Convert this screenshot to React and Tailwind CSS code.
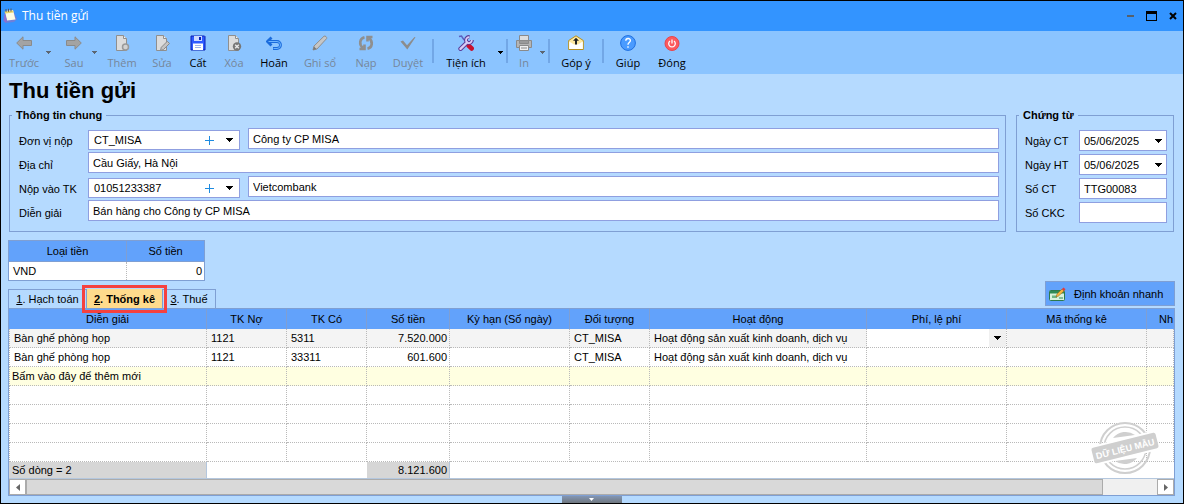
import React from "react";

const columns = [
  { title: "Diễn giải", width: "w-[198px]" },
  { title: "TK Nợ", width: "w-20" },
  { title: "TK Có", width: "w-20" },
  { title: "Số tiền", width: "w-[83px]" },
  { title: "Kỳ hạn (Số ngày)", width: "w-[120px]" },
  { title: "Đối tượng", width: "w-20" },
  { title: "Hoạt động", width: "w-[217px]" },
  { title: "Phí, lệ phí", width: "w-[140px]" },
  { title: "Mã thống kê", width: "w-[140px]" },
  { title: "Nh", width: "" },
];

const rows = [
  ["Bàn ghế phòng họp", "1121", "5311", "7.520.000", "", "CT_MISA", "Hoạt động sản xuất kinh doanh, dịch vụ", "", "", ""],
  ["Bàn ghế phòng họp", "1121", "33311", "601.600", "", "CT_MISA", "Hoạt động sản xuất kinh doanh, dịch vụ", "", "", ""],
];

const blank = ["", "", "", "", "", "", "", "", "", ""];

function Caret({ className = "text-black" }) {
  return (
    <svg width="7" height="4" viewBox="0 0 7 4" className={`shrink-0 pointer-events-none ${className}`} shapeRendering="crispEdges">
      <path fill="currentColor" d="M0 0h7v1H0zM1 1h5v1H1zM2 2h3v1H2zM3 3h1v1H3z" />
    </svg>
  );
}

function SmallCaret({ className }) {
  return (
    <svg width="5" height="3" viewBox="0 0 5 3" className={`shrink-0 ${className}`} shapeRendering="crispEdges">
      <path fill="currentColor" d="M0 0h5v1H0zM1 1h3v1H1zM2 2h1v1H2z" />
    </svg>
  );
}

function PageIcon({ children }) {
  return (
    <svg width="16" height="16" viewBox="0 0 16 16" fill="none">
      <path d="M2.500.5h7l3 3v12h-10z" fill="#dcdcdc" stroke="#8f8f8f" />
      <path d="M9.500.5v3h3" fill="#f4f4f4" stroke="#8f8f8f" />
      {children}
    </svg>
  );
}

const icons = {
  back: (
    <svg width="16" height="16" viewBox="0 0 16 16">
      <path d="M.7 8 7 1.800V5.500h8.500v5H7v3.700z" fill="#a3a3a3" stroke="#8a8a8a" />
    </svg>
  ),
  next: (
    <svg width="16" height="16" viewBox="0 0 16 16">
      <path d="M15.300 8 9 1.800V5.500H.5v5H9v3.700z" fill="#a3a3a3" stroke="#8a8a8a" />
    </svg>
  ),
  add: (
    <PageIcon>
      <circle cx="11.500" cy="12" r="3" fill="#d2d2d2" stroke="#999" strokeWidth="1.500" />
    </PageIcon>
  ),
  edit: (
    <PageIcon>
      <path d="M6.500 15.500l.8-3.200 6-6 2.200 2.200-6 6z" fill="#c4c4c4" stroke="#8a8a8a" />
    </PageIcon>
  ),
  save: (
    <svg width="16" height="16" viewBox="0 0 16 16">
      <path d="M1 1h13.500l.5.500V15H1z" fill="#2f5bff" stroke="#0b1fb4" />
      <path d="M4 1h8v5H4z" fill="#cdd9ff" />
      <path d="M9 2h2v3H9z" fill="#0b1fb4" />
      <path d="M3 8.500h10V15H3z" fill="#fff" />
      <path d="M5 10.500h6M5 12.500h6" stroke="#9fb3e8" />
    </svg>
  ),
  remove: (
    <PageIcon>
      <circle cx="11" cy="11.500" r="4.200" fill="#777" />
      <path d="M9.200 9.700l3.600 3.600M12.800 9.700l-3.600 3.600" stroke="#e8e8e8" strokeWidth="1.400" />
    </PageIcon>
  ),
  undo: (
    <svg width="16" height="16" viewBox="0 0 16 16" fill="none">
      <path d="M5.500 2.500 1.500 6.500l4 4M2 6.500h9a3.500 3.500 0 0 1 0 7H7" stroke="#1a6bdc" strokeWidth="2.800" />
      <path d="M2.500 6.500H11a3.500 3.500 0 0 1 0 7H7.500" stroke="#6db4ff" />
    </svg>
  ),
  post: (
    <svg width="16" height="16" viewBox="0 0 16 16">
      <path d="M1 15l1-4L12 1.200c1.200-.8 3.300 1 2.600 2.400L5 14z" fill="#c6c6c6" stroke="#8f8f8f" />
      <path d="M1 15l1-3.500L4.500 14z" fill="#777" />
    </svg>
  ),
  load: (
    <svg width="16" height="16" viewBox="0 0 16 16" fill="none" stroke="#8f8f8f" strokeWidth="2.600">
      <path d="M6.500 2.200C1.500 3.500.8 9.500 4.800 12.800M1.500 14h5V9.500" />
      <path d="M9.500 13.800c5-1.300 5.700-7.300 1.700-10.600M14.500 2h-5v4.500" />
    </svg>
  ),
  approve: (
    <svg width="16" height="16" viewBox="0 0 16 16">
      <path d="M.5 6.500 3 5.500l4 4.700L14.500 2l1 .3L7.300 14.500z" fill="#8c8c8c" />
    </svg>
  ),
  tools: (
    <svg width="16" height="16" viewBox="0 0 16 16" fill="none">
      <path d="M1 1.500 3.500 1l1.800 2.800L10 9" stroke="#5b5fc0" strokeWidth="1.500" />
      <path d="M10.500 10.500l3.200 3" stroke="#c8102e" strokeWidth="4.500" strokeLinecap="round" />
      <path d="M2.500 13.800 9 7.500" stroke="#5a3d9a" strokeWidth="4.400" strokeLinecap="round" />
      <path d="M11.500 2A3 3 0 1 0 14 5" stroke="#5a3d9a" strokeWidth="3.800" />
      <path d="M2.500 13.800 9 7.500" stroke="#d9ccf5" strokeWidth="2.400" strokeLinecap="round" />
      <path d="M11.300 2.300A2.900 2.900 0 1 0 13.800 5" stroke="#d9ccf5" strokeWidth="1.800" />
    </svg>
  ),
  print: (
    <svg width="16" height="16" viewBox="0 0 16 16" stroke="#8a8a8a">
      <path d="M.5 5.500h15v7H.5z" fill="#b5b5b5" />
      <path d="M3.500.5h9v5h-9z" fill="#dedede" />
      <path d="M3.500 5.500h9v3h-9z" fill="#9a9a9a" />
      <path d="M3.500 10.500h9v5h-9z" fill="#efefef" />
      <path d="M5 13h6" />
    </svg>
  ),
  feedback: (
    <svg width="16" height="16" viewBox="0 0 16 16">
      <path d="M.7 5.500 8 .8l7.300 4.700v9H.7z" fill="#ffe9a0" stroke="#b8901c" />
      <path d="M1.200 6.500 6 9.500h4l4.800-3V14H1.200z" fill="#fff" />
      <path d="M8 2.800l3 3H9V9.500H7V5.800H5z" fill="#222" />
    </svg>
  ),
  help: (
    <svg width="16" height="16" viewBox="0 0 16 16" fill="none">
      <circle cx="8" cy="8" r="7.400" fill="#4a9bff" stroke="#1f6fe0" />
      <path d="M5.800 5.800c0-3 4.600-3 4.600-.2C10.400 7.600 8 7.600 8 9.800M8 11.300v1.500" stroke="#fff" strokeWidth="1.400" />
    </svg>
  ),
  close: (
    <svg width="16" height="16" viewBox="0 0 16 16" fill="none">
      <circle cx="8" cy="8.500" r="7" fill="#fb5a5f" stroke="#e8454b" />
      <path d="M6 6a3.300 3.300 0 1 0 4 0M8 4.500V8.500" stroke="#fff" strokeWidth="1.300" />
    </svg>
  ),
};

function ToolButton({ icon, label, width, disabled }) {
  return (
    <button
      type="button"
      disabled={disabled}
      className={`flex flex-col items-center gap-1 whitespace-nowrap text-[11px] leading-4 ${width} ${
        disabled ? "text-[#76869a]" : "text-black"
      }`}
    >
      {icons[icon]}
      <span>{label}</span>
    </button>
  );
}

function ToolCaret({ label, disabled }) {
  return (
    <button type="button" aria-label={label} disabled={disabled} className="flex w-2 justify-center pt-4">
      <SmallCaret className={disabled ? "text-[#5c6672]" : "text-black"} />
    </button>
  );
}

function Separator() {
  return <span className="mx-0.5 mt-1 h-6 w-0.5 bg-[#72a7e6]" />;
}

function TextField({ id, value, className }) {
  return <input id={id} aria-label={id} defaultValue={value} className={`h-[21px] min-w-0 border border-[#8f9fe0] bg-white px-1 outline-none ${className}`} />;
}

function Combo({ id, value }) {
  return (
    <div className="flex h-5 w-[152px] shrink-0 items-center border border-[#8f9fe0] bg-white pl-[5px]">
      <select id={id} className="h-full min-w-0 flex-1 appearance-none outline-none">
        <option>{value}</option>
      </select>
      <button type="button" aria-label="Thêm" className="flex w-5 justify-center">
        <svg width="9" height="9" viewBox="0 0 9 9">
          <path d="M4 0h1v4h4v1H5v4H4V5H0V4h4z" fill="#1d8be0" />
        </svg>
      </button>
      <span className="flex w-5 justify-center">
        <Caret />
      </span>
    </div>
  );
}

function DateField({ id, value }) {
  return (
    <div className="flex h-[21px] w-[88px] items-center border border-[#8f9fe0] bg-white px-1">
      <select id={id} className="h-full min-w-0 flex-1 appearance-none outline-none">
        <option>{value}</option>
      </select>
      <Caret />
    </div>
  );
}

function Stamp() {
  return (
    <svg className="pointer-events-none absolute right-[15px] bottom-5" width="68" height="54" viewBox="0 0 68 54" fill="none">
      <circle cx="34" cy="27" r="25" stroke="#cfcfcf" strokeWidth="2" />
      <circle cx="34" cy="27" r="21" stroke="#cfcfcf" strokeWidth="1.500" />
      <path d="M22 17a16 16 0 0 1 22-3zM24 40a16 16 0 0 0 22-3z" fill="#cfcfcf" />
      <g transform="rotate(-14 34 27)">
        <rect x="1" y="17" width="66" height="20" fill="#fff" />
        <rect x="1" y="19" width="66" height="16" rx="2" fill="#cfcfcf" />
        <text x="34" y="31" textAnchor="middle" fontSize="9" fontWeight="700" fill="#fff">
          DỮ LIỆU MẪU
        </text>
      </g>
    </svg>
  );
}

function Cell({ index, value, active }) {
  const align = index === 3 ? "pr-0.5 text-right" : "pl-1";
  const first = index === 0 ? "border-l" : "";
  if (active) {
    return (
      <td className="border-r border-b border-dotted border-[#b9b9b9] bg-white p-0">
        <div className="flex h-[18px] items-center">
          <select aria-label="Phí, lệ phí" className="h-full min-w-0 flex-1 appearance-none bg-white outline-none" />
          <span className="flex h-full w-[17px] items-center justify-center bg-[#f0f0f0]">
            <Caret />
          </span>
        </div>
      </td>
    );
  }
  return <td className={`h-[19px] whitespace-nowrap border-r border-b border-dotted border-[#b9b9b9] py-0 ${align} ${first}`}>{value}</td>;
}

export default function App() {
  return (
    <div className="flex min-h-screen flex-col border border-black bg-[#b5daff] font-['Liberation_Sans',Arial,sans-serif] text-[11px] leading-4 text-black">
      <header className="flex h-[30px] items-center bg-[#3394ff] pl-0.5 pr-1.5 font-['Open_Sans','Noto_Sans',sans-serif]">
        <svg width="14" height="16" viewBox="0 0 14 16">
          <path d="M2 3l8-1 4 9-3 3-9 1z" fill="#6f7fd8" />
          <path d="M2 3l8-1 2.500 9.500L4 12.500z" fill="#fdfbe4" />
          <path d="M1.500 3.500 10 2.500l.5 2L2 5.500z" fill="#e9d46a" />
          <path d="M3 1v3M5.500.800v3M8 .5v3" stroke="#555" />
          <path d="M1.500 5l-1 8 2 1.500 1.500-2z" fill="#8d6fd0" />
        </svg>
        <span className="ml-[5px] text-xs leading-4 text-white">Thu tiền gửi</span>
        <div className="ml-auto flex items-center gap-3">
          <button type="button" aria-label="Thu nhỏ" className="h-0.5 w-[7px] bg-[#55606c]" />
          <button type="button" aria-label="Phóng to" className="h-2.5 w-[11px] border border-t-[3px] border-black" />
          <button type="button" aria-label="Đóng">
            <svg width="8" height="8" viewBox="0 0 8 8">
              <path d="M1 1l6 6M7 1 1 7" stroke="#000" strokeWidth="2" />
            </svg>
          </button>
        </div>
      </header>

      <nav className="flex h-[43px] items-start bg-[#8bc4ff] pl-[3px] pt-1 font-['Open_Sans','Noto_Sans',sans-serif]">
        <ToolButton icon="back" label="Trước" width="w-10" disabled />
        <ToolCaret label="Trước, chọn" disabled />
        <div className="ml-1.5 flex">
          <ToolButton icon="next" label="Sau" width="w-8" disabled />
          <ToolCaret label="Sau, chọn" disabled />
        </div>
        <div className="ml-1 flex">
          <ToolButton icon="add" label="Thêm" width="w-10" disabled />
          <ToolButton icon="edit" label="Sửa" width="w-10" disabled />
          <ToolButton icon="save" label="Cất" width="w-8" />
          <ToolButton icon="remove" label="Xóa" width="w-10" disabled />
          <ToolButton icon="undo" label="Hoãn" width="w-10" />
          <ToolButton icon="post" label="Ghi sổ" width="w-13" disabled />
          <ToolButton icon="load" label="Nạp" width="w-10" disabled />
          <ToolButton icon="approve" label="Duyệt" width="w-11" disabled />
        </div>
        <Separator />
        <ToolButton icon="tools" label="Tiện ích" width="w-15" />
        <ToolCaret label="Tiện ích, chọn" />
        <Separator />
        <ToolButton icon="print" label="In" width="w-7" disabled />
        <ToolCaret label="In, chọn" disabled />
        <Separator />
        <ToolButton icon="feedback" label="Góp ý" width="w-12" />
        <Separator />
        <ToolButton icon="help" label="Giúp" width="w-11" />
        <ToolButton icon="close" label="Đóng" width="w-11" />
      </nav>

      <main className="flex flex-1 flex-col pl-[7px] pr-2 pt-[5px]">
        <h1 className="h-7 pl-px text-[22px] font-bold leading-6">Thu tiền gửi</h1>

        <div className="flex gap-2.5 px-px">
          <fieldset className="min-w-0 flex-1 border border-[#7f9fd3] pl-[7px] pr-1.5 pb-[9px]">
            <legend className="-ml-[5px] px-1 font-bold">Thông tin chung</legend>
            <div className="flex flex-col gap-[3px] pt-[5px]">
              <div className="flex h-[21px]">
                <label htmlFor="donvi" className="w-[71px] shrink-0 pl-0.5 pt-[5px]">Đơn vị nộp</label>
                <div className="pt-0.5"><Combo id="donvi" value="CT_MISA" /></div>
                <TextField id="ten-donvi" value="Công ty CP MISA" className="ml-2 flex-1" />
              </div>
              <div className="flex h-[21px]">
                <label htmlFor="diachi" className="w-[71px] shrink-0 pl-0.5 pt-[5px]">Địa chỉ</label>
                <TextField id="diachi" value="Cầu Giấy, Hà Nội" className="flex-1" />
              </div>
              <div className="flex h-[21px]">
                <label htmlFor="taikhoan" className="w-[71px] shrink-0 pl-0.5 pt-[5px]">Nộp vào TK</label>
                <div className="pt-0.5"><Combo id="taikhoan" value="01051233387" /></div>
                <TextField id="nganhang" value="Vietcombank" className="ml-2 flex-1" />
              </div>
              <div className="flex h-[21px]">
                <label htmlFor="diengiai" className="w-[71px] shrink-0 pl-0.5 pt-[5px]">Diễn giải</label>
                <TextField id="diengiai" value="Bán hàng cho Công ty CP MISA" className="flex-1" />
              </div>
            </div>
          </fieldset>

          <fieldset className="w-[158px] shrink-0 border border-[#7f9fd3] pl-2 pr-1.5 pb-2">
            <legend className="-ml-1.5 px-1 font-bold">Chứng từ</legend>
            <div className="flex flex-col gap-[3px] pt-[7px]">
              <div className="flex h-[21px] items-center justify-between">
                <label htmlFor="ngayct">Ngày CT</label>
                <DateField id="ngayct" value="05/06/2025" />
              </div>
              <div className="flex h-[21px] items-center justify-between">
                <label htmlFor="ngayht">Ngày HT</label>
                <DateField id="ngayht" value="05/06/2025" />
              </div>
              <div className="flex h-[21px] items-center justify-between">
                <label htmlFor="soct">Số CT</label>
                <TextField id="soct" value="TTG00083" className="w-[88px]" />
              </div>
              <div className="flex h-[21px] items-center justify-between">
                <label htmlFor="sockc">Số CKC</label>
                <TextField id="sockc" value="" className="w-[88px]" />
              </div>
            </div>
          </fieldset>
        </div>

        <div className="mt-2 flex items-end justify-between">
          <div>
            <table className="w-[197px] table-fixed border border-[#7f9fd3] bg-white">
              <thead>
                <tr className="h-[21px] bg-[#62a2fb]">
                  <th className="w-[118px] border-r border-b border-[#7f9fd3] p-0 font-normal">Loại tiền</th>
                  <th className="border-b border-[#7f9fd3] p-0 font-normal">Số tiền</th>
                </tr>
              </thead>
              <tbody>
                <tr className="h-[19px]">
                  <td className="border-r border-dotted border-r-[#b9b9b9] py-0 pl-1">VND</td>
                  <td className="py-0 pr-0.5 text-right">0</td>
                </tr>
              </tbody>
            </table>
            <div className="mt-2 flex h-[19px]" role="tablist">
              <button type="button" role="tab" className="w-[79px] border border-b-0 border-[#7f9fd3] text-center">
                <u>1</u>. Hạch toán
              </button>
              <button type="button" role="tab" aria-selected="true" className="relative w-[76px] border-r border-[#7f9fd3] bg-[#ffdb8c] text-center font-bold">
                <u>2</u>. Thống kê
                <span className="pointer-events-none absolute -inset-x-[5px] -top-1 -bottom-[5px] z-10 border-3 border-[#f5413f]" />
              </button>
              <button type="button" role="tab" className="w-[53px] border border-l-0 border-b-0 border-[#7f9fd3] text-center">
                <u>3</u>. Thuế
              </button>
            </div>
          </div>
          <button type="button" className="mb-0.5 flex h-[25px] w-[130px] items-center gap-2 border border-[#7f9fd3] bg-[#62a2fb] pl-[3px]">
            <svg width="17" height="14" viewBox="0 0 17 14">
              <rect x=".5" y="3.500" width="15" height="10" rx="1" fill="#d9f2dc" stroke="#2c7a4b" />
              <path d="M1 4h14v2.500H1z" fill="#2f8a54" />
              <path d="M3 8.500h5v2.500H3z" fill="#6fb584" />
              <path d="M10 11h4" stroke="#2f8a54" />
              <path d="M7 10l1-3 5-5 2 2-5.500 5z" fill="#f3b53c" stroke="#8a5a12" strokeWidth=".5" />
              <path d="M13 2l1.500-1.500 2 1.800L15 4z" fill="#e4393c" />
            </svg>
            Định khoản nhanh
          </button>
        </div>

        <section className="relative overflow-hidden border border-[#7f9fd3] bg-white">
          <table className="w-full table-fixed border-separate border-spacing-0">
            <thead>
              <tr className="bg-[#62a2fb]">
                {columns.map((col, i) => (
                  <th
                    key={col.title}
                    className={`h-5 overflow-hidden whitespace-nowrap border-[#7f9fd3] py-0 font-normal ${
                      i === 9 ? "pl-3 pr-0 text-left" : "border-r px-0"
                    } ${col.width}`}
                  >
                    {col.title}
                  </th>
                ))}
              </tr>
            </thead>
            <tbody>
              {rows.map((row, r) => (
                <tr key={r} className={r === 0 ? "bg-[#f4f4f4]" : ""}>
                  {row.map((value, i) => (
                    <Cell key={i} index={i} value={value} active={r === 0 && i === 7} />
                  ))}
                </tr>
              ))}
              <tr className="bg-[#ffffe1]">
                {blank.map((value, i) => (
                  <td
                    key={i}
                    className={`h-[19px] whitespace-nowrap border-r border-b border-dotted border-[#b9b9b9] py-0 pr-0 ${
                      i === 0 ? "border-l pl-0.5" : "pl-1"
                    }`}
                  >
                    {i === 0 ? "Bấm vào đây để thêm mới" : ""}
                  </td>
                ))}
              </tr>
              {[0, 1, 2, 3].map((r) => (
                <tr key={r}>
                  {blank.map((value, i) => (
                    <Cell key={i} index={i} value={value} />
                  ))}
                </tr>
              ))}
            </tbody>
            <tfoot>
              <tr>
                {blank.map((value, i) => (
                  <td
                    key={i}
                    className={`h-4 border-b border-[#b4c7de] py-0 ${i === 0 ? "border-r bg-[#d6d6d6] pl-[3px]" : ""} ${
                      i === 3 ? "border-r bg-[#d6d6d6] pr-0.5 text-right" : ""
                    }`}
                  >
                    {i === 0 ? "Số dòng = 2" : i === 3 ? "8.121.600" : ""}
                  </td>
                ))}
              </tr>
            </tfoot>
          </table>
          <div className="flex h-4 bg-[#f0f0f0]">
            <button type="button" aria-label="Cuộn trái" className="flex w-[17px] items-center justify-center border border-[#ababab] bg-white">
              <svg width="4" height="7" viewBox="0 0 4 7"><path d="M4 0v7L0 3.500z" fill="#666" /></svg>
            </button>
            <div className="grow-[1077] basis-0 border border-[#ababab] bg-[#d9d9d9]" />
            <div className="grow-[54] basis-0" />
            <button type="button" aria-label="Cuộn phải" className="flex w-[17px] items-center justify-center border border-[#ababab] bg-white">
              <svg width="4" height="7" viewBox="0 0 4 7"><path d="M0 0v7l4-3.500z" fill="#666" /></svg>
            </button>
          </div>
          <Stamp />
        </section>

        <button type="button" aria-label="Mở rộng" className="mx-auto mt-auto flex h-[7px] w-15 items-center justify-center bg-linear-to-b from-[#8296b4] to-[#70777f]">
          <svg width="5" height="3" viewBox="0 0 5 3"><path d="M0 0h5L2.500 3z" fill="#fff" /></svg>
        </button>
      </main>
    </div>
  );
}
